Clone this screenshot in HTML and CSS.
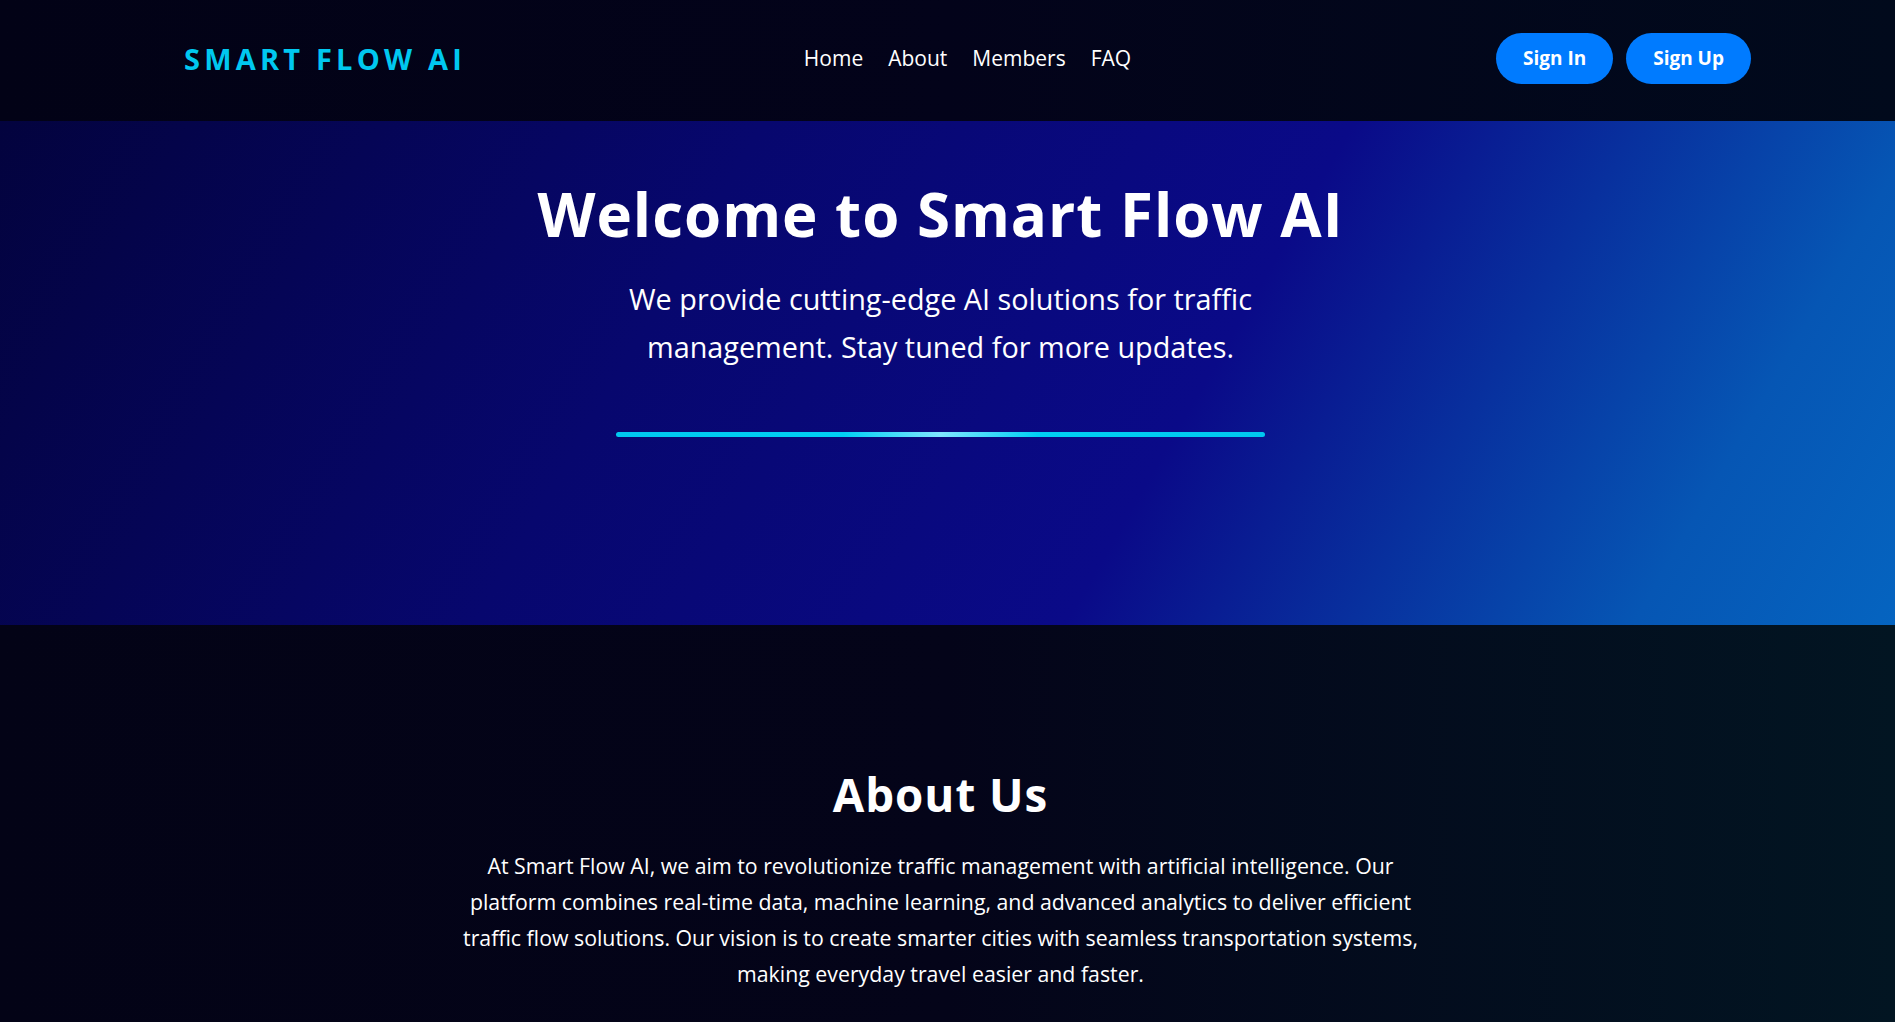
FILE: index.html
```html
<!DOCTYPE html>
<html lang="en">
<head>
<meta charset="utf-8">
<title>Smart Flow AI</title>
<link rel="stylesheet" href="styles.css">
</head>
<body>
<header class="site-header">
  <div class="logo">SMART FLOW AI</div>
  <nav class="main-nav">
    <a href="#">Home</a>
    <a href="#">About</a>
    <a href="#">Members</a>
    <a href="#">FAQ</a>
  </nav>
  <div class="auth">
    <a class="btn" href="#">Sign In</a>
    <a class="btn" href="#">Sign Up</a>
  </div>
</header>
<section class="hero">
  <h1 class="hero-title">Welcome to Smart Flow AI</h1>
  <p class="hero-text">We provide cutting-edge AI solutions for traffic management. Stay tuned for more updates.</p>
  <div class="hero-bar"></div>
</section>
<section class="about">
  <h2 class="about-title">About Us</h2>
  <p class="about-text">At Smart Flow AI, we aim to revolutionize traffic management with artificial intelligence. Our platform combines real-time data, machine learning, and advanced analytics to deliver efficient traffic flow solutions. Our vision is to create smarter cities with seamless transportation systems, making everyday travel easier and faster.</p>
</section>
</body>
</html>
```
FILE: styles.css
```css
* { box-sizing: border-box; }
html, body { margin: 0; padding: 0; }
body {
  font-family: "Open Sans", "Noto Sans", sans-serif;
  color: #fff;
  background: #03031a;
  overflow: hidden;
  height: 1022px;
}
.site-header {
  height: 121px;
  display: grid;
  grid-template-columns: 1fr auto 1fr;
  align-items: center;
  padding: 0 144px 5px 184px;
  background: linear-gradient(90deg, #020216 0%, #03031a 50%, #010a1c 100%);
}
.logo {
  font-weight: 700;
  font-size: 29px;
  letter-spacing: 4.2px;
  color: #00c8f0;
  justify-self: start;
}
.main-nav {
  display: flex;
  gap: 25px;
}
.main-nav a {
  color: #fff;
  text-decoration: none;
  font-size: 21px;
}
.auth {
  justify-self: end;
  display: flex;
  gap: 13px;
}
.btn {
  display: flex;
  align-items: center;
  justify-content: center;
  height: 51px;
  padding: 0 27px;
  border-radius: 26px;
  background: #007bff;
  color: #fff;
  font-weight: 700;
  font-size: 19px;
  text-decoration: none;
}
.hero {
  height: 504px;
  display: flex;
  flex-direction: column;
  align-items: center;
  padding-top: 63px;
  background: linear-gradient(120deg, #03033e 0%, #07076e 35%, #0a0a88 62%, #0656b4 88%, #0564c0 100%);
  padding-right: 14px;
}
.hero-title {
  margin: 0;
  font-size: 60px;
  font-weight: 700;
  line-height: 1;
  letter-spacing: 1px;
}
.hero-text {
  margin: 31px 0 0;
  max-width: 690px;
  text-align: center;
  font-size: 28.8px;
  line-height: 48px;
}
.hero-bar {
  margin-top: 61px;
  width: 649px;
  height: 5px;
  border-radius: 3px;
  background: linear-gradient(90deg, #00c8f0 0%, #00d0f4 35%, #7fe6ff 50%, #00d0f4 65%, #00c8f0 100%);
}
.about {
  height: 397px;
  display: flex;
  flex-direction: column;
  align-items: center;
  padding-top: 147px;
  padding-right: 14px;
  background: linear-gradient(90deg, #030316 0%, #040419 50%, #021522 100%);
}
.about-title {
  margin: 0;
  font-size: 45.7px;
  font-weight: 700;
  line-height: 1;
  letter-spacing: 1px;
}
.about-text {
  margin: 30px 0 0;
  max-width: 965px;
  text-align: center;
  font-size: 21.3px;
  line-height: 36px;
}
```
